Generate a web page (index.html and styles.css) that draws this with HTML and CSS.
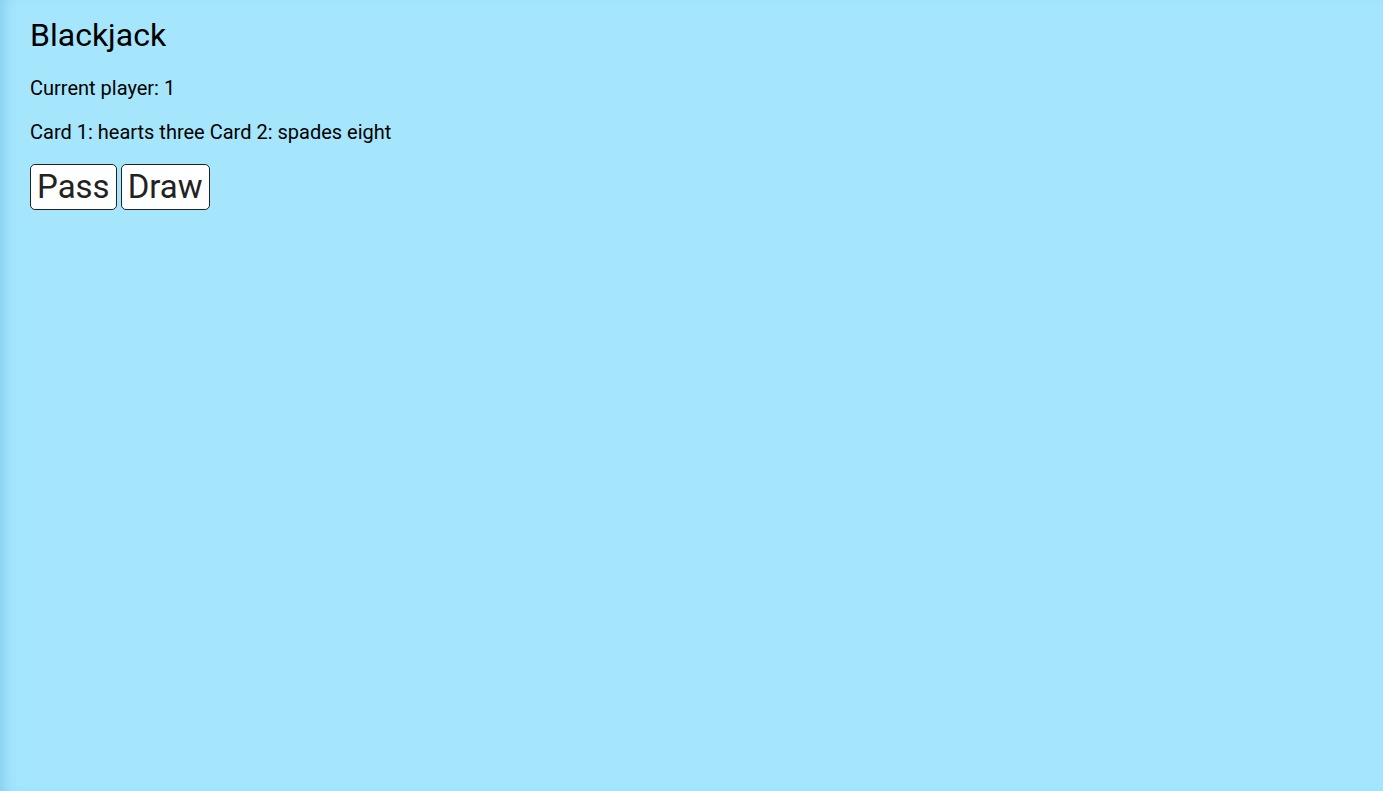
FILE: index.html
```html
<!DOCTYPE html>
<html>
<head>
<meta charset="utf-8">
<link rel="stylesheet" href="styles.css">
</head>
<body>
<div class="app">
  <h1 class="title">Blackjack</h1>
  <p class="line">Current player: 1</p>
  <p class="line">Card 1: hearts three Card 2: spades eight</p>
  <div class="actions">
    <button class="btn">Pass</button>
    <button class="btn">Draw</button>
  </div>
</div>
</body>
</html>
```
FILE: styles.css
```css
html, body {
  margin: 0;
  padding: 0;
  height: 100%;
}
body {
  background: #a5e6fd;
  font-family: Roboto, "Liberation Sans", sans-serif;
  color: #000;
}
.app {
  min-height: 100%;
  box-sizing: border-box;
  padding: 14px 30px;
  box-shadow: inset 12px 0 14px -8px rgba(80, 170, 210, 0.4);
}
.title {
  font-size: 32px;
  font-weight: 400;
  margin: 0 0 20px;
  line-height: 42px;
}
.line {
  font-size: 20px;
  line-height: 24px;
  margin: 0 0 20px;
}
.actions {
  display: flex;
  gap: 4px;
}
.btn {
  font-family: Roboto, "Liberation Sans", sans-serif;
  font-size: 33px;
  color: #222;
  background: #fff;
  border: 1px solid #222;
  border-radius: 5px;
  padding: 2px 6px;
  line-height: 40px;
}
```
